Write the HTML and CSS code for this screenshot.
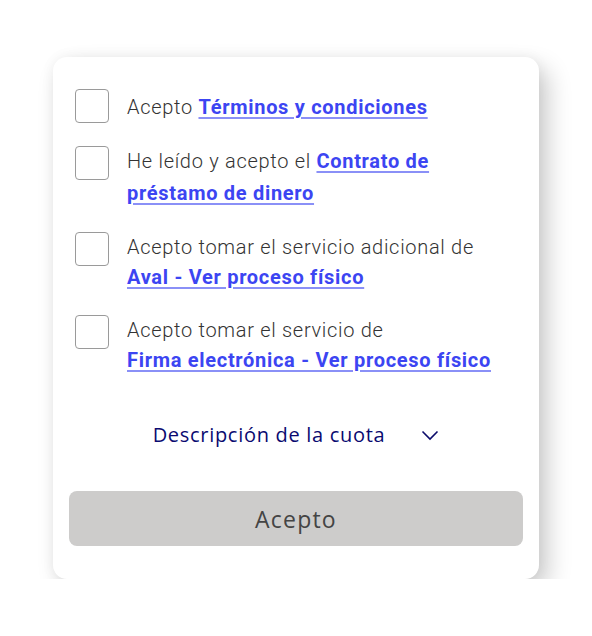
FILE: index.html
```html
<!DOCTYPE html>
<html lang="es">
<head>
<meta charset="utf-8">
<link rel="stylesheet" href="styles.css">
</head>
<body>
<div class="card">
  <ul class="terms">
    <li class="row first">
      <span class="box"></span>
      <p class="label">Acepto <a href="#">Términos y condiciones</a></p>
    </li>
    <li class="row">
      <span class="box"></span>
      <p class="label">He leído y acepto el <a href="#">Contrato de<br>préstamo de dinero</a></p>
    </li>
    <li class="row tight">
      <span class="box"></span>
      <p class="label">Acepto tomar el servicio adicional de<br><a href="#">Aval - Ver proceso físico</a></p>
    </li>
    <li class="row tight">
      <span class="box"></span>
      <p class="label">Acepto tomar el servicio de<br><a href="#">Firma electrónica - Ver proceso físico</a></p>
    </li>
  </ul>
  <div class="desc">
    <span>Descripción de la cuota</span>
    <svg class="chev" width="18" height="11" viewBox="0 0 18 11"><path d="M1.5 1.5 L9 9 L16.5 1.5" fill="none" stroke="#0b0b6b" stroke-width="1.6"/></svg>
  </div>
  <button class="btn">Acepto</button>
</div>
</body>
</html>
```
FILE: styles.css
```css
html, body { margin: 0; padding: 0; background: #fff; }
body { padding: 57px 53px 0 53px; font-family: Roboto, "Liberation Sans", sans-serif; }
.card {
  width: 486px;
  height: 522px;
  box-sizing: border-box;
  background: #fff;
  border-radius: 14px;
  box-shadow: 9px 11px 24px rgba(0,0,0,0.2), 0 0 14px rgba(0,0,0,0.05);
  padding: 32px 16px 0 16px;
}
.terms { list-style: none; margin: 0; padding: 0 0 0 6px; }
.row { display: flex; align-items: flex-start; gap: 18px; margin-bottom: 23px; }
.row:last-child { margin-bottom: 0; }
.box {
  flex: none;
  width: 32px; height: 32px;
  border: 1px solid #9a9a9a;
  border-radius: 4px;
}
.label {
  margin: -1px 0 0 0;
  font-size: 20px;
  font-weight: 300;
  letter-spacing: 0.7px;
  color: #333;
  line-height: 32px;
}
.first .label { padding-top: 3px; }
.tight .label { line-height: 30px; margin-top: 0; }
.label a {
  color: #3c45f2;
  font-weight: 700;
  text-decoration: underline;
  text-decoration-color: #8a90f7;
  text-decoration-thickness: 2px;
  text-underline-offset: 3px;
}
.desc {
  display: flex;
  align-items: center;
  justify-content: center;
  gap: 36px;
  height: 30px;
  margin-top: 44px;
  color: #0a0a70;
  font-family: "Open Sans", sans-serif;
  font-size: 20px;
  font-weight: 500;
  letter-spacing: 0.7px;
}
.chev { margin-top: 2px; }
.btn {
  display: block;
  width: 100%;
  height: 55px;
  margin-top: 42px;
  border: 0;
  border-radius: 8px;
  background: #cdcccb;
  color: #444;
  font-family: "Open Sans", sans-serif;
  font-size: 23px;
  letter-spacing: 1.2px;
}
```
